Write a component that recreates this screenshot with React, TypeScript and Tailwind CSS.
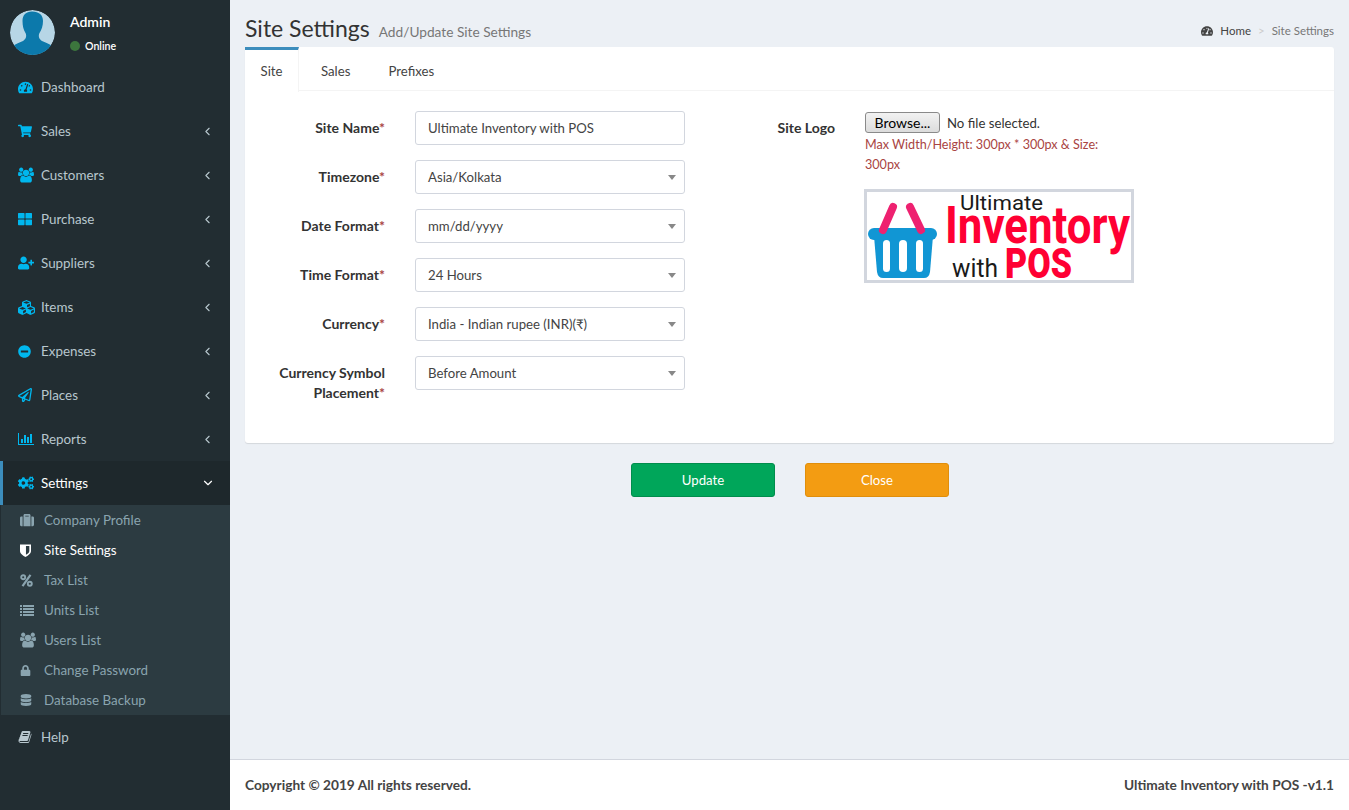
import type { ReactNode } from "react";
import {
  FaCogs,
  FaCubes,
  FaDatabase,
  FaLock,
  FaMinusCircle,
  FaRegPaperPlane,
  FaShoppingCart,
  FaSuitcase,
  FaTachometerAlt,
  FaThLarge,
  FaUserPlus,
} from "react-icons/fa";
import { FiChevronDown, FiChevronLeft } from "react-icons/fi";

const UsersIcon = ({ size }: { size: number }) => (
  <svg width={size} height={size} viewBox="0 -64 1920 1920" fill="currentColor">
    <path d="M593 896q-162 5-265 128H194q-82 0-138-40.500T0 865q0-353 124-353 6 0 43.500 21t97.500 42.500T384 597q67 0 133-23-5 37-5 66 0 139 81 256zm1071 637q0 120-73 189.500t-194 69.500H523q-121 0-194-69.500T256 1533q0-53 3.500-103.500t14-109T300 1212t43-97.500 62-81 85.500-53.500T602 960q10 0 43 21.500t73 48 107 48 135 21.500 135-21.500 107-48 73-48 43-21.500q61 0 111.500 20t85.500 53.500 62 81 43 97.500 26.500 108.500 14 109 3.500 103.500zM640 256q0 106-75 181t-181 75-181-75-75-181 75-181T384 0t181 75 75 181zm704 384q0 159-112.500 271.500T960 1024 688.500 911.500 576 640t112.500-271.500T960 256t271.500 112.500T1344 640zm576 225q0 78-56 118.500t-138 40.500h-134q-103-123-265-128 81-117 81-256 0-29-5-66 66 23 133 23 59 0 119-21.500t97.500-42.500 43.500-21q124 0 124 353zm-128-609q0 106-75 181t-181 75-181-75-75-181 75-181 181-75 181 75 75 181z" />
  </svg>
);

const BarsIcon = () => (
  <svg width="16" height="14" viewBox="0 0 2048 1792" fill="currentColor">
    <path d="M640 896v512H384V896h256zm384-512v1024H768V384h256zm1024 1152v128H0V128h128v1408h1920zm-640-896v768h-256V640h256zm384-384v1152h-256V256h256z" />
  </svg>
);

const BookIcon = () => (
  <svg width="14" height="14" viewBox="0 0 1664 1792" fill="currentColor">
    <path d="M1639 478q40 57 18 129l-275 906q-19 64-76.500 107.500T1183 1664H260q-77 0-148.500-53.500T12 1479q-24-67-2-127 0-4 3-27t4-37q1-8-3-21.500t-3-19.500q2-11 8-21t16.500-23.500T52 1180q23-38 45-91.500t30-91.500q3-10 .5-30t-.5-28q3-11 17-28t17-23q21-36 42-92t25-90q1-9-2.500-32t.5-28q4-13 22-30.500t22-22.500q19-26 42.500-84.500T339 418q1-8-3-25.500t-2-26.500q2-8 9-18t18-23 17-21q8-12 16.500-30.500t15-35 16-36 19.500-32T491.500 145t36-11.500T575 139l-1 3q38-9 51-9h761q74 0 114 56t18 130l-274 906q-36 119-71.500 153.500T1044 1412H175q-27 0-38 15-11 16-1 43 24 70 144 70h923q29 0 56-15.500t35-41.500l300-987q7-22 5-57 38 15 59 43zm-1064 2q-4 13 2 22.500t20 9.500h608q13 0 25.500-9.500T1247 480l21-64q4-13-2-22.500t-20-9.500H638q-13 0-25.500 9.500T596 416zm-83 256q-4 13 2 22.500t20 9.500h608q13 0 25.500-9.500T1164 736l21-64q4-13-2-22.500t-20-9.500H555q-13 0-25.500 9.500T513 672z" />
  </svg>
);

const ShieldIcon = () => (
  <svg width="11" height="13" viewBox="0 0 12 14" fill="currentColor">
    <path
      fillRule="evenodd"
      d="M0 .5H12V7.500C12 10.500 8.500 12.800 6 14 3.500 12.800 0 10.500 0 7.500ZM6.500 2.200V11.700C8.200 10.700 10.200 9.300 10.200 7.500V2.200Z"
    />
  </svg>
);

const PercentIcon = () => (
  <svg width="13" height="13" viewBox="0 0 13 13" fill="none" stroke="currentColor">
    <circle cx="3.200" cy="3.200" r="2" strokeWidth="1.900" />
    <circle cx="9.800" cy="9.800" r="2" strokeWidth="1.900" />
    <path d="M10.500 .8L2.500 12.200" strokeWidth="2.200" />
  </svg>
);

const ListIcon = () => (
  <svg width="14" height="11" viewBox="0 0 14 11" fill="currentColor">
    <path d="M0 0h2v2H0zM3 0h11v2H3zM0 3h2v2H0zM3 3h11v2H3zM0 6h2v2H0zM3 6h11v2H3zM0 9h2v2H0zM3 9h11v2H3z" />
  </svg>
);

const menu = [
  { label: "Dashboard", icon: <FaTachometerAlt size={15} />, arrow: false },
  { label: "Sales", icon: <FaShoppingCart size={14} />, arrow: true },
  { label: "Customers", icon: <UsersIcon size={16} />, arrow: true },
  { label: "Purchase", icon: <FaThLarge size={14} />, arrow: true },
  { label: "Suppliers", icon: <FaUserPlus size={16} />, arrow: true },
  { label: "Items", icon: <FaCubes size={17} />, arrow: true },
  { label: "Expenses", icon: <FaMinusCircle size={13} />, arrow: true },
  { label: "Places", icon: <FaRegPaperPlane size={14} />, arrow: true },
  { label: "Reports", icon: <BarsIcon />, arrow: true },
];

const subMenu = [
  { label: "Company Profile", icon: <FaSuitcase size={14} /> },
  { label: "Site Settings", icon: <ShieldIcon />, active: true },
  { label: "Tax List", icon: <PercentIcon /> },
  { label: "Units List", icon: <ListIcon /> },
  { label: "Users List", icon: <UsersIcon size={16} /> },
  { label: "Change Password", icon: <FaLock size={11} /> },
  { label: "Database Backup", icon: <FaDatabase size={12} /> },
];

const fields = [
  { label: "Site Name", value: "Ultimate Inventory with POS", select: false },
  { label: "Timezone", value: "Asia/Kolkata", select: true },
  { label: "Date Format", value: "mm/dd/yyyy", select: true },
  { label: "Time Format", value: "24 Hours", select: true },
  { label: "Currency", value: "India - Indian rupee (INR)(₹)", select: true },
];

const Avatar = () => (
  <svg width="45" height="45" viewBox="0 0 45 45" className="rounded-full">
    <circle cx="22.500" cy="22.500" r="22.500" fill="#b7d6e6" />
    <path
      d="M22 1.500C16 1.500 12.500 5 12.500 11C12.500 16 13.500 20 15.500 23C17 26 16 29 13 31C9 33 5 34 3 36L3 45H42L42 36C40 34 36 33 32 31C29 29 28 26 29.500 23C31.500 20 33 16 33 11C33 5 29 1.500 22 1.500Z"
      fill="#0c79ab"
    />
  </svg>
);

const NavItem = ({ icon, label, arrow }: { icon: ReactNode; label: string; arrow?: boolean }) => (
  <div className="flex h-[44px] items-center pr-[15px] pl-[18px] text-[#b8c7ce]">
    <span className="flex w-[23px] shrink-0 items-center text-[#00b7ee]">{icon}</span>
    <span>{label}</span>
    {arrow && <FiChevronLeft size={13} className="mr-[1px] ml-auto" />}
  </div>
);

const Sidebar = () => (
  <aside className="flex w-[230px] shrink-0 flex-col bg-[#222d32] text-[13.4px]">
    <div className="flex h-[65px] pt-[10px] pl-[10px]">
      <Avatar />
      <div className="ml-[15px] text-white">
        <div className="mt-[2px] text-[14px] leading-[20px] font-semibold">Admin</div>
        <div className="mt-[6px] flex items-center text-[10.600px] leading-[16px] font-semibold">
          <span className="mr-[5px] h-[10px] w-[10px] rounded-full bg-[#3c763d]" />
          Online
        </div>
      </div>
    </div>
    <nav>
      {menu.map((m) => (
        <NavItem key={m.label} icon={m.icon} label={m.label} arrow={m.arrow} />
      ))}
      <div className="flex h-[44px] items-center border-l-[3px] border-[#3c8dbc] bg-[#1e282c] pr-[15px] pl-[15px] text-white">
        <span className="flex w-[23px] shrink-0 items-center text-[#00b7ee]">
          <FaCogs size={16} />
        </span>
        <span>Settings</span>
        <FiChevronDown size={14} className="ml-auto" />
      </div>
      <div className="ml-[1px] bg-[#2c3b41]">
        {subMenu.map((s) => (
          <div
            key={s.label}
            className={`flex h-[30px] items-center pl-[19px] ${s.active ? "text-white" : "text-[#8aa4af]"}`}
          >
            <span className="flex w-[24px] shrink-0 items-center">{s.icon}</span>
            <span>{s.label}</span>
          </div>
        ))}
      </div>
      <div className="flex h-[44px] items-center pl-[18px] text-[#b8c7ce]">
        <span className="flex w-[23px] shrink-0 items-center">
          <BookIcon />
        </span>
        <span>Help</span>
      </div>
    </nav>
  </aside>
);

const Field = ({ label, value, select, required = true }: { label: ReactNode; value: string; select?: boolean; required?: boolean }) => (
  <div className="mb-[15px] flex">
    <label className="mr-[30px] w-[140px] pt-[7px] text-right text-[14px] leading-[20px] font-bold text-[#333]">
      {label}
      {required && <span className="text-[#a94442]">*</span>}
    </label>
    <div className="flex h-[34px] w-[270px] items-center justify-between rounded-[3px] border border-[#d2d6de] bg-white pt-[1px] pr-[8px] pl-[12px] text-[#444]">
      <span>{value}</span>
      {select && <span className="h-0 w-0 border-x-[4px] border-t-[5px] border-x-transparent border-t-[#888]" />}
    </div>
  </div>
);

// coordinates are the inside of the 3px frame
const Logo = () => (
  <svg width="270" height="94" viewBox="0 0 264 88" className="-ml-[1px] border-[3px] border-[#d2d6de]">
    <path d="M7 44L10 80Q11 86 16 86H57Q62 86 63 80L66 44Z" fill="#1196d4" />
    <rect x="1" y="36" width="69" height="12" rx="6" fill="#1196d4" />
    <rect x="16" y="48" width="7" height="32" rx="3.500" fill="#fff" />
    <rect x="32" y="48" width="8" height="32" rx="4" fill="#fff" />
    <rect x="49" y="48" width="7" height="32" rx="3.500" fill="#fff" />
    <path d="M16 38L26 15" stroke="#ee2170" strokeWidth="8" strokeLinecap="round" />
    <path d="M43 15L54 38" stroke="#ee2170" strokeWidth="8" strokeLinecap="round" />
    <text x="93" y="18" fontFamily="Roboto, sans-serif" fontSize="21" fill="#1a1a1a" textLength="83" lengthAdjust="spacingAndGlyphs">
      Ultimate
    </text>
    <text x="78" y="51" fontFamily="Roboto, sans-serif" fontWeight="700" fontSize="52" fill="#ff0033" textLength="185" lengthAdjust="spacingAndGlyphs">
      Inventory
    </text>
    <text x="85" y="85" fontFamily="Roboto, sans-serif" fontSize="26" fill="#1a1a1a" textLength="46" lengthAdjust="spacingAndGlyphs">
      with
    </text>
    <text x="138" y="86" fontFamily="Roboto, sans-serif" fontWeight="900" fontSize="42" fill="#ff0033" textLength="67" lengthAdjust="spacingAndGlyphs">
      POS
    </text>
  </svg>
);

export default function App() {
  return (
    <div className="flex min-h-screen bg-[#ecf0f5] text-[13.2px] font-['Lato',sans-serif] text-[#333]">
      <Sidebar />
      <div className="flex min-w-0 flex-1 flex-col">
        <main className="flex-1 px-[15px] pt-[14px]">
          <div className="flex h-[33px] items-start justify-between">
            <div className="flex items-baseline">
              <h1 className="text-[23px] leading-[28px] text-[#333]">Site Settings</h1>
              <span className="ml-[9px] text-[13.700px] text-[#777]">Add/Update Site Settings</span>
            </div>
            <div className="mt-[8px] flex items-center text-[11.500px] text-[#444]">
              <FaTachometerAlt size={12} className="mr-[7px]" />
              Home
              <span className="mx-[7px] text-[#ccc]">&gt;</span>
              <span className="text-[#777]">Site Settings</span>
            </div>
          </div>

          <section className="h-[396px] rounded-[3px] bg-white shadow-[0_1px_1px_rgba(0,0,0,0.1)]">
            <div className="flex h-[44px] border-b border-[#f4f4f4] text-[#444]">
              <div className="h-[45px] w-[54px] border-t-[3px] border-r border-[#3c8dbc] border-r-[#f4f4f4] bg-white pt-[12px] text-center">Site</div>
              <div className="pt-[15px] pr-[16px] pl-[22px]">Sales</div>
              <div className="pt-[15px] pl-[22px]">Prefixes</div>
            </div>
            <div className="flex pt-[20px]">
              <div className="w-[440px]">
                {fields.map((f) => (
                  <Field key={f.label} label={f.label} value={f.value} select={f.select} />
                ))}
                <Field
                  label={
                    <>
                      Currency Symbol
                      <br />
                      Placement
                    </>
                  }
                  value="Before Amount"
                  select
                />
              </div>
              <div className="ml-[50px] flex">
                <label className="mr-[30px] w-[100px] pt-[7px] text-right text-[14px] leading-[20px] font-bold">Site Logo</label>
                <div className="w-[270px]">
                  <div className="flex items-start pt-[1px]">
                    <button className="h-[21px] w-[75px] rounded-[3px] border border-[#8a8a8a] bg-gradient-to-b from-[#f2f2f2] to-[#dcdcdc] text-[14px] leading-[19px] text-black">
                      Browse...
                    </button>
                    <span className="mt-[1px] ml-[7px] leading-[20px] text-[#333]">No file selected.</span>
                  </div>
                  <p className="mt-[2px] mb-[14px] w-[250px] text-[12.600px] leading-[20px] text-[#a94442]">Max Width/Height: 300px * 300px &amp; Size: 300px</p>
                  <Logo />
                </div>
              </div>
            </div>
          </section>

          <div className="mt-[20px] flex justify-center gap-[30px] pl-[1px]">
            <button className="h-[34px] w-[144px] rounded-[3px] border border-[#008d4c] bg-[#00a65a] pt-[1px] text-white">Update</button>
            <button className="h-[34px] w-[144px] rounded-[3px] border border-[#e08e0b] bg-[#f39c12] pt-[1px] text-white">Close</button>
          </div>
        </main>
        <footer className="flex h-[51px] items-center justify-between border-t border-[#d2d6de] bg-white px-[15px] text-[13.700px] font-bold text-[#444]">
          <span>Copyright © 2019 All rights reserved.</span>
          <span>Ultimate Inventory with POS -v1.1</span>
        </footer>
      </div>
    </div>
  );
}
